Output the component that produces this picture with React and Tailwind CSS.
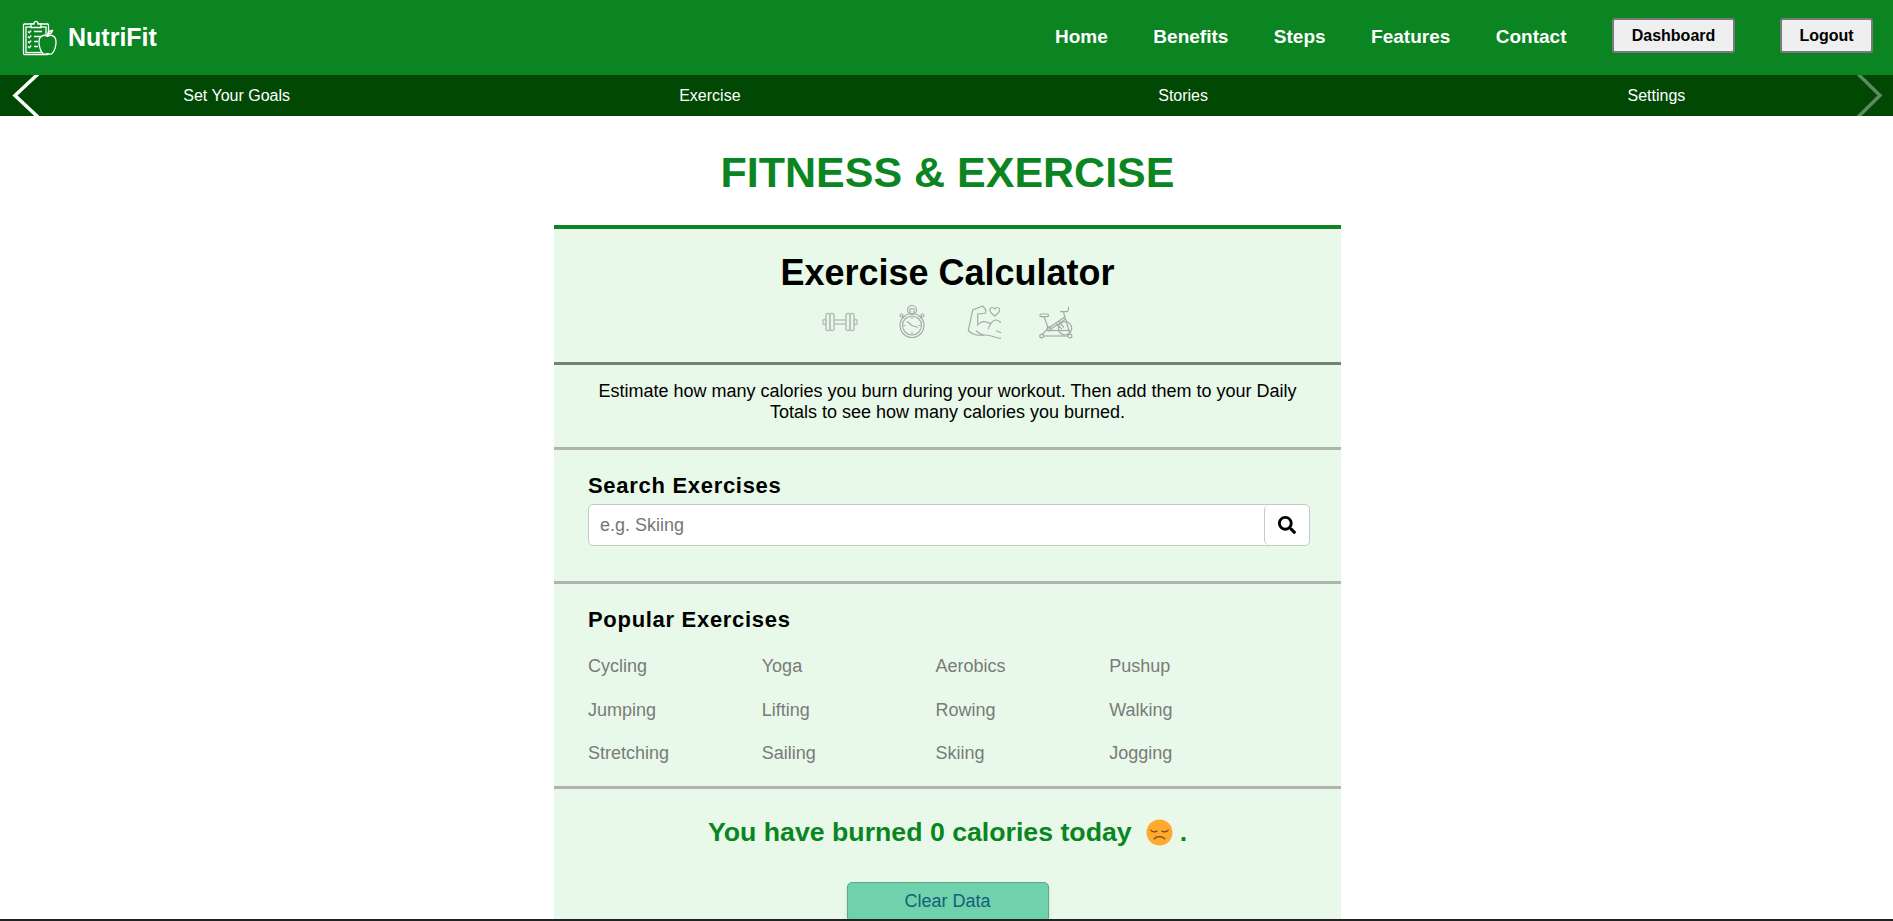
import { FaSearch } from "react-icons/fa";

const navLinks = ["Home", "Benefits", "Steps", "Features", "Contact"];
const subLinks = ["Set Your Goals", "Exercise", "Stories", "Settings"];
const popular = [
  "Cycling", "Yoga", "Aerobics", "Pushup",
  "Jumping", "Lifting", "Rowing", "Walking",
  "Stretching", "Sailing", "Skiing", "Jogging",
];

const LogoIcon = () => (
  <svg width="36" height="36" viewBox="0 0 36 36" fill="none" stroke="#fff" strokeWidth="1.300">
    <rect x="1.500" y="4" width="25" height="30.500" rx="1" />
    <rect x="4" y="7" width="20" height="25.500" />
    <path d="M9 7.500V4h3c0-3.500 4-3.500 4 0h3v3.500z" fill="#0a8522" />
    <path d="M6 11.500l1.200 1.200 2-2.200M6 16.500l1.200 1.200 2-2.200M6 21.500l1.200 1.200 2-2.200M6 26.500l1.200 1.200 2-2.200" />
    <path d="M12 11.500h8M12 16.500h7M12 21.500h4M12 26.500h4" />
    <path d="M25.500 16.500c-2-1.500-5-1.500-7 .5-3 3.500-1 13.500 2.500 16.500 1.500 1.200 3 .8 4.500.2 1.500.6 3 1 4.500-.2 3.500-3 5.500-13 2.500-16.500-2-2-5-2-7-.5z" fill="#0a8522" />
    <path d="M25.500 16.500c0-2 .3-3.500 1-5M26 14c2.500 0 4-1.500 4.500-3.500-2.500 0-4 1.500-4.500 3.500z" />
  </svg>
);

const ArrowIcon = ({ flip, className }) => (
  <svg width="28" height="41" viewBox="0 0 28 41" fill="none" stroke="currentColor" strokeWidth="3.500" className={className}>
    <path d={flip ? "M2 -1L24 20.500L2 42" : "M26 -1L3 20.500L26 42"} />
  </svg>
);

const Dumbbell = () => (
  <svg width="36" height="36" viewBox="0 0 36 36" fill="none" stroke="#b9bdb9" strokeWidth="1.500">
    <rect x="1" y="15.500" width="3" height="5" rx="1" />
    <rect x="4" y="9.500" width="4" height="17" rx="1.500" />
    <rect x="8" y="9.500" width="4" height="17" rx="1.500" />
    <path d="M12 16h12M12 20h12" />
    <rect x="24" y="9.500" width="4" height="17" rx="1.500" />
    <rect x="28" y="9.500" width="4" height="17" rx="1.500" />
    <rect x="32" y="15.500" width="3" height="5" rx="1" />
  </svg>
);

const Stopwatch = () => (
  <svg width="36" height="36" viewBox="0 0 36 36" fill="none" stroke="#a5aaa5" strokeWidth="1.200">
    <circle cx="18" cy="21.500" r="12" />
    <circle cx="18" cy="21.500" r="9.500" />
    <circle cx="18" cy="6" r="4.500" />
    <rect x="16" y="4.500" width="4" height="5" rx="1" />
    <path d="M8.500 12.500l1.500 1.500M27.500 12.500L26 14" />
    <circle cx="7.500" cy="11.500" r="1.500" />
    <circle cx="28.500" cy="11.500" r="1.500" />
    <path d="M18 21.500l-5-4M18 21.500l6 2M18 13v2M18 28v2M9.500 21.500h2M24.500 21.500h2" />
  </svg>
);

const Muscle = () => (
  <svg width="36" height="36" viewBox="0 0 36 36" fill="none" stroke="#a5aaa5" strokeWidth="1.200">
    <path d="M35 34.300c-5 0-9.500-3.300-15-3.300-3.500 0-7 .5-10 0-3-.8-5.500-2.300-7.700-4.300L6.700 6l10-4 3.300 4-.7 3.300-7.600.7V21c2-2.500 4.500-3.800 6.600-3.300 2.500.2 4.700 1.600 6.700 1.600 1.500-2.300 3.500-3.300 5-3.300 2 0 3.500 1.500 5 2.700" />
    <path d="M10 26.700c2.500 2.500 5.500 4 8.300 4.300M30 26.700l5 2M25 19.300c-1.500 1.800-2.700 3.800-2.700 6" />
    <path d="M28.700 12c-4.700-3.500-5.200-6-4.700-7 1-2 3.500-2 4.700 0 1.300-2 3.800-2 4.800 0 .5 1 0 3.500-4.800 7z" />
  </svg>
);

const Bike = () => (
  <svg width="36" height="36" viewBox="0 0 36 36" fill="none" stroke="#a5aaa5" strokeWidth="1.200">
    <rect x="2" y="10" width="8.500" height="2.700" rx="1.300" />
    <path d="M6 12.700l4.300 11.600L3.700 31" />
    <path d="M22 7.700h6.700c1.300 0 1.800-2.500 1.800-5" />
    <path d="M25.300 7.700L32 30" />
    <path d="M10.300 24.300L27 12.700M11.500 26L27.500 15M18 20l6 5M21 17.500l5 6" />
    <circle cx="27" cy="24.300" r="6.700" />
    <circle cx="11" cy="24.800" r="2" />
    <path d="M11 26.500h21" />
    <circle cx="3.700" cy="32" r="1.900" />
    <circle cx="32" cy="32" r="1.900" />
    <path d="M5.500 32h24.500" />
  </svg>
);

const SadFace = () => (
  <svg width="27" height="27" viewBox="0 0 28 28" className="ml-[14px] mr-[7px]">
    <circle cx="14" cy="14" r="13.500" fill="#ffa92e" />
    <g fill="none" stroke="#6b4a2a" strokeWidth="1.300" strokeLinecap="round">
      <path d="M5 11.500c1.500 2 4.500 2.500 6.500 1M16.500 12.500c2 1.500 5 1 6.500-1" />
      <path d="M8.500 20.500c3-3 8-3 11 0" />
    </g>
  </svg>
);

const Divider = ({ color = "bg-[#b0b3b0]" }) => <div className={`h-[3px] ${color}`}></div>;

const App = () => {
  return (
    <div className="flex h-[921px] flex-col overflow-hidden bg-white font-['Liberation_Sans',Arial,sans-serif] text-black">
      {/* top nav */}
      <header className="flex h-[75px] shrink-0 items-center justify-between bg-[#0a8522] pl-[22px] pr-[20px] text-white">
        <div className="flex items-center gap-[10px]">
          <LogoIcon />
          <span className="text-[25px] font-bold">NutriFit</span>
        </div>
        <nav className="flex items-center text-[19px] font-bold">
          {navLinks.map((link) => (
            <a key={link} className="mr-[45.500px]">
              {link}
            </a>
          ))}
          <button className="mb-[4px] h-[35px] w-[123px] rounded-[3px] border-2 border-[#7a7a7a] bg-[#efefef] text-[16px] font-bold text-black">
            Dashboard
          </button>
          <button className="mb-[4px] ml-[45px] h-[35px] w-[93px] rounded-[3px] border-2 border-[#7a7a7a] bg-[#efefef] text-[16px] font-bold text-black">
            Logout
          </button>
        </nav>
      </header>

      {/* sub nav */}
      <div className="relative grid h-[41px] shrink-0 grid-cols-4 items-center bg-[#004804] text-center text-[16px] text-white">
        {subLinks.map((link) => (
          <a key={link}>{link}</a>
        ))}
        <ArrowIcon className="absolute left-[12px] top-0 text-white" />
        <ArrowIcon flip className="absolute right-[9px] top-0 text-[#5c8a5e]" />
      </div>

      <main className="min-h-0 flex-1 overflow-hidden pl-[2px]">
        <h1 className="pt-[30px] text-center text-[43px] leading-[52px] font-bold text-[#0a8522]">
          FITNESS &amp; EXERCISE
        </h1>

        <section className="mx-auto mt-[27px] w-[787px] border-t-4 border-[#0a8522] bg-[#e8f9e9]">
          <div className="flex h-[133px] flex-col items-center pt-[22px]">
            <h2 className="text-[36px] leading-[44px] font-bold">Exercise Calculator</h2>
            <div className="mt-[9px] flex items-center gap-[36px]">
              <Dumbbell />
              <Stopwatch />
              <Muscle />
              <Bike />
            </div>
          </div>
          <Divider color="bg-[#748274]" />

          <p className="mx-auto flex h-[82px] w-[720px] items-center justify-center pb-[8px] text-center text-[18px] leading-[21px]">
            Estimate how many calories you burn during your workout. Then add them to your Daily
            Totals to see how many calories you burned.
          </p>
          <Divider />

          <div className="h-[131px] px-[34px] pt-[22px]">
            <h3 className="text-[22px] leading-[28px] font-bold tracking-[0.7px]">Search Exercises</h3>
            <div className="mt-[4px] flex h-[42px] w-[722px] items-center rounded-[5px] border border-[#c8c8c8] bg-white">
              <span className="flex-1 pl-[11px] text-[18px] text-[#767676]">e.g. Skiing</span>
              <span className="flex h-full w-[45px] items-center justify-center rounded-[5px] border-l border-[#c8c8c8] text-black">
                <FaSearch className="text-[18px]" />
              </span>
            </div>
          </div>
          <Divider />

          <div className="h-[202px] px-[34px] pt-[22px]">
            <h3 className="text-[22px] leading-[28px] font-bold tracking-[0.7px]">Popular Exercises</h3>
            <div className="mt-[22px] grid w-[695px] grid-cols-4 gap-y-[22px] text-[18px] leading-[21.500px] text-[#7a7a7a]">
              {popular.map((item) => (
                <span key={item}>{item}</span>
              ))}
            </div>
          </div>
          <Divider />

          <div className="flex h-[93px] items-center justify-center pb-[6px] text-[26.700px] font-bold text-[#0a8522]">
            You have burned 0 calories today <SadFace />.
          </div>
          <div className="flex justify-center">
            <button className="h-[40px] w-[202px] rounded-[5px] border border-[#57a88c] bg-[#6fd2ac] pb-[2px] text-[18px] text-[#14607a] shadow-md">
              Clear Data
            </button>
          </div>
        </section>
      </main>
      <div className="h-[2px] shrink-0 bg-[#222]"></div>
    </div>
  );
};

export default App;
